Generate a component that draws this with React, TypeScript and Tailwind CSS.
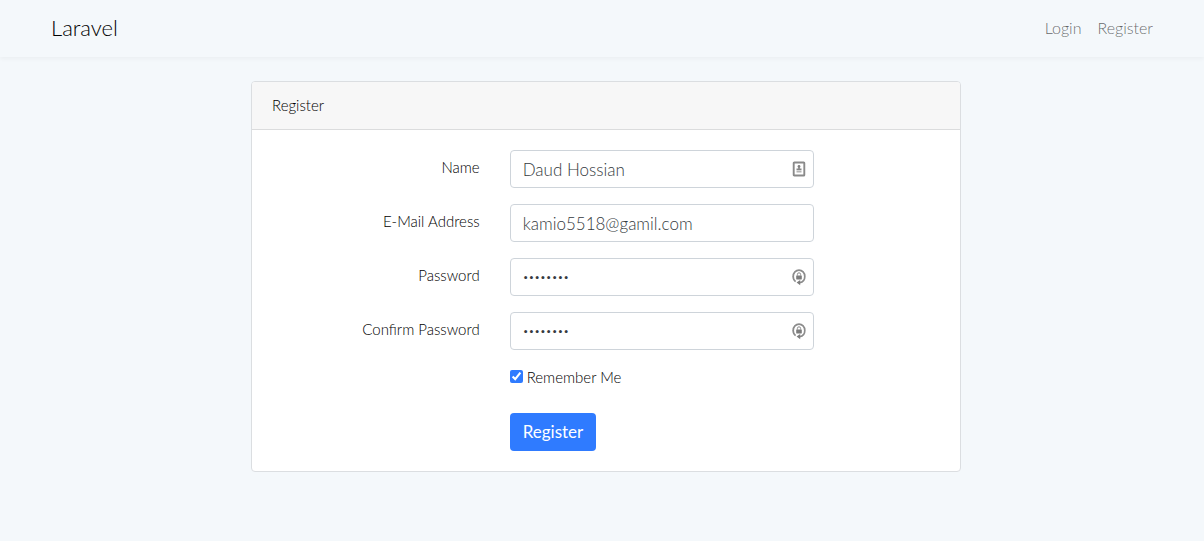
import type { ReactNode } from "react";

function ContactIcon() {
  return (
    <svg viewBox="0 0 14 16" className="h-4 w-3.5" fill="none" aria-hidden="true">
      <rect x="1.7" y="1.5" width="10.6" height="13" rx="0.6" stroke="#8a8a8a" strokeWidth="1.9" />
      <circle cx="7" cy="5.4" r="1.4" fill="#808080" />
      <path d="M6.2 6h1.6v1.4h1.7v1.8h-5V7.4h1.7z" fill="#858585" />
      <path d="M4.5 9.8h5v1.8h-5z" fill="#b4b4b4" />
    </svg>
  );
}

function PasswordIcon() {
  return (
    <svg viewBox="0 0 14 18" className="h-[18px] w-3.5" fill="none" aria-hidden="true">
      <path d="M3.6 13.6A6 6 0 0 1 1.2 8.4C1.2 4.9 3.8 2.1 7 2.1s5.8 2.8 5.8 6.3c0 3.2-2 5.6-5 6.2" stroke="#8c8c8c" strokeWidth="1.7" />
      <path d="M8.2 12v5.2L4.6 14.6z" fill="#7c7c7c" />
      <rect x="4.2" y="7.4" width="5.6" height="4" rx="0.4" fill="#7c7c7c" />
      <path d="M5.4 7.6V6.4a1.6 1.6 0 0 1 3.2 0v1.2" stroke="#8c8c8c" strokeWidth="1" />
    </svg>
  );
}

type FieldProps = {
  id: string;
  label: string;
  type: string;
  value: string;
  icon?: ReactNode;
};

function Field({ id, label, type, value, icon }: FieldProps) {
  return (
    <div className="mb-4 grid grid-cols-12">
      <label htmlFor={id} className="col-span-4 px-[15px] pt-1.5 text-right">
        {label}
      </label>
      <div className="relative col-span-6 mx-[15px]">
        <input
          id={id}
          name={id}
          type={type}
          defaultValue={value}
          className={`block h-[38px] w-full rounded border border-[#ced4da] bg-white px-3 leading-6 text-[#343a40] outline-none focus:border-[#80bdff] ${
            type === "password" ? "text-[10px]" : "text-[17px]"
          }`}
        />
        {icon && <span className="pointer-events-none absolute inset-y-0 right-2 flex items-center">{icon}</span>}
      </div>
    </div>
  );
}

export default function App() {
  return (
    <div className="min-h-screen bg-[#f4f8fb] font-['Lato','Open_Sans',sans-serif] text-[15px] leading-[23px] font-light text-black">
      <nav className="h-[57px] pl-2 shadow-[0_2px_4px_rgba(0,0,0,0.04)]">
        <div className="mx-auto flex h-full max-w-[1140px] items-center justify-between px-[15px] pb-0.5">
          <a href="#" className="text-[22px] leading-8">
            Laravel
          </a>
          <div className="flex gap-4 px-2 text-base text-black/60">
            <a href="#login">Login</a>
            <a href="#register">Register</a>
          </div>
        </div>
      </nav>
      <main className="py-6 pl-2">
        <div className="mx-auto grid max-w-[1140px] grid-cols-12 px-[15px]">
          <section className="col-span-8 col-start-3 mx-[15px] overflow-hidden rounded border border-[#dbdee1] bg-white">
            <h1 className="border-b border-[#dbdcdd] bg-[#f7f7f7] px-5 py-3">Register</h1>
            <form className="p-5" onSubmit={(event) => event.preventDefault()}>
              <Field id="name" label="Name" type="text" value="Daud Hossian" icon={<ContactIcon />} />
              <Field id="email" label="E-Mail Address" type="email" value="kamio5518@gamil.com" />
              <Field id="password" label="Password" type="password" value="password" icon={<PasswordIcon />} />
              <Field id="password-confirm" label="Confirm Password" type="password" value="password" icon={<PasswordIcon />} />
              <div className="mb-6 grid grid-cols-12">
                <label className="col-span-6 col-start-5 mx-[15px] flex gap-1">
                  <input type="checkbox" defaultChecked className="mt-1 size-[13px] accent-[#2f7bff]" />
                  Remember Me
                </label>
              </div>
              <div className="grid grid-cols-12">
                <div className="col-span-6 col-start-5 mx-[15px]">
                  <button type="submit" className="block h-[38px] rounded bg-[#2f7bff] px-[13px] text-[17px] leading-6 font-normal text-white">
                    Register
                  </button>
                </div>
              </div>
            </form>
          </section>
        </div>
      </main>
    </div>
  );
}
